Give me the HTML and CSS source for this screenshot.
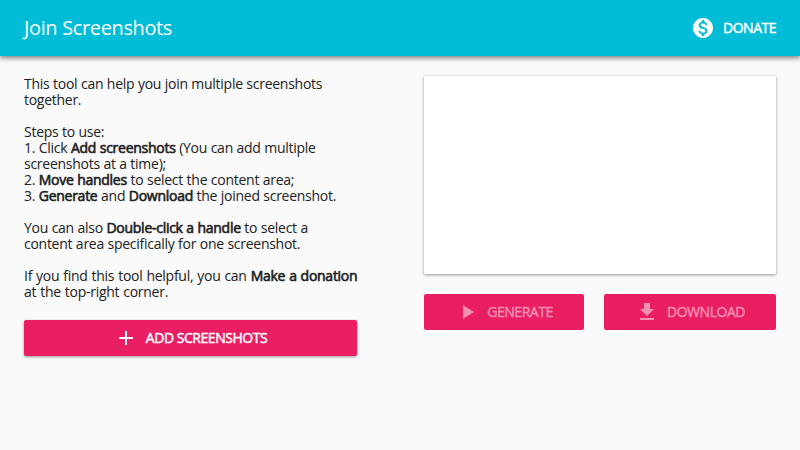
FILE: index.html
```html
<!DOCTYPE html>
<html lang="en">
<head>
<meta charset="utf-8">
<title>Join Screenshots</title>
<link rel="stylesheet" href="styles.css">
</head>
<body>
<header class="bar">
  <h1 class="title">Join Screenshots</h1>
  <a class="donate"><svg class="icon" viewBox="0 0 24 24"><path d="M12 2C6.48 2 2 6.48 2 12s4.480 10 10 10 10-4.480 10-10S17.520 2 12 2zm1.410 16.090V20h-2.670v-1.930c-1.710-.36-3.160-1.460-3.270-3.400h1.960c.1 1.050.82 1.870 2.650 1.870 1.960 0 2.400-.98 2.400-1.590 0-.83-.44-1.610-2.670-2.140-2.480-.6-4.180-1.620-4.180-3.670 0-1.720 1.390-2.840 3.110-3.210V4h2.670v1.950c1.860.45 2.790 1.860 2.850 3.390H14.300c-.05-1.110-.64-1.870-2.220-1.870-1.500 0-2.400.68-2.400 1.640 0 .84.65 1.390 2.670 1.910s4.180 1.390 4.180 3.910c-.01 1.830-1.380 2.830-3.120 3.160z"/></svg><span>DONATE</span></a>
</header>
<main class="content">
  <section class="intro">
    <p>This tool can help you join multiple screenshots together.</p>
    <p>Steps to use:<br>1. Click <b>Add screenshots</b> (You can add multiple screenshots at a time);<br>2. <b>Move handles</b> to select the content area;<br>3. <b>Generate</b> and <b>Download</b> the joined screenshot.</p>
    <p>You can also <b>Double-click a handle</b> to select a<br>content area specifically for one screenshot.</p>
    <p class="note">If you find this tool helpful, you can <b>Make a donation</b><br>at the top-right corner.</p>
    <button class="btn add"><svg class="icon" viewBox="0 0 24 24"><path d="M19 13h-6v6h-2v-6H5v-2h6V5h2v6h6v2z"/></svg><span>ADD SCREENSHOTS</span></button>
  </section>
  <section class="output">
    <div class="preview"></div>
    <div class="actions">
      <button class="btn generate" disabled><svg class="icon" viewBox="0 0 24 24"><path d="M8 5v14l11-7z"/></svg><span>GENERATE</span></button>
      <button class="btn download" disabled><svg class="icon" viewBox="0 0 24 24"><path d="M19 9h-4V3H9v6H5l7 7 7-7zM5 18v2h14v-2H5z"/></svg><span>DOWNLOAD</span></button>
    </div>
  </section>
</main>
</body>
</html>
```
FILE: styles.css
```css
* { box-sizing: border-box; }
body {
  margin: 0;
  min-height: 100vh;
  background: #fafafa;
  color: #212121;
  font: 14px/16px "Open Sans", "Noto Sans", sans-serif;
  letter-spacing: -.27px;
  word-spacing: .25px;
}
b { font-weight: 400; -webkit-text-stroke: .6px currentColor; }
.donate, .btn { font-weight: 400; -webkit-text-stroke: .45px currentColor; }
.bar {
  height: 56px;
  padding: 0 24px;
  display: flex;
  align-items: center;
  justify-content: space-between;
  background: #00bcd7;
  color: #fff;
  box-shadow: 0 2px 5px rgba(0, 0, 0, .5);
}
.title { margin: 0; font-size: 20px; font-weight: 400; line-height: 24px; letter-spacing: -.38px; }
.donate { display: flex; align-items: center; gap: 8px; letter-spacing: -.5px; }
.icon { width: 24px; height: 24px; fill: currentColor; flex: none; -webkit-text-stroke: 0; }
.content { display: flex; justify-content: space-between; padding: 20px 24px; }
.intro { width: 333px; }
.intro p { margin: 0 0 16px; }
.intro .note { word-spacing: .6px; white-space: nowrap; }
.btn {
  height: 36px;
  border: 0;
  border-radius: 2px;
  padding: 0;
  display: flex;
  align-items: center;
  justify-content: center;
  gap: 8px;
  background: #e91e63;
  color: #fff;
  font-family: inherit;
  font-size: 14px;
  line-height: 16px;
  letter-spacing: -.47px;
}
.btn:disabled { color: #f48fb1; }
.add { width: 100%; margin-top: 20px; box-shadow: 0 1px 3px rgba(0, 0, 0, .4); }
.output { width: 352px; }
.preview { height: 198px; background: #fff; box-shadow: 0 1px 3px rgba(0, 0, 0, .4); }
.actions { display: flex; gap: 20px; margin-top: 20px; }
.generate { width: 160px; }
.download { width: 172px; }
```
